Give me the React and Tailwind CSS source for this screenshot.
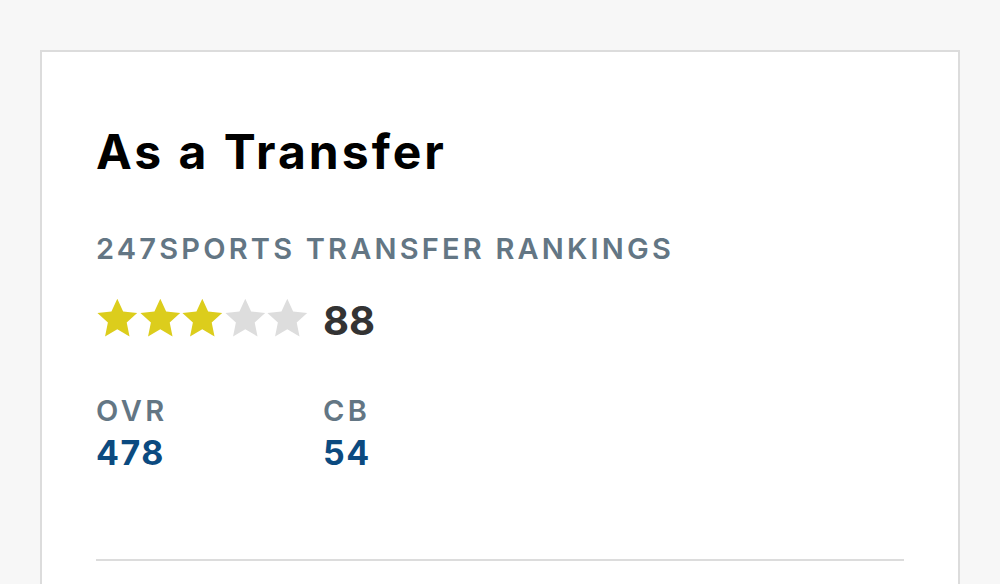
import React from "react";

const Star = ({ filled }) => (
  <svg width="42.6" height="42" viewBox="0 0 24 23" className="shrink-0">
    <path
      d="M12 0.6l3.3 7.2 7.9 0.9-5.9 5.4 1.6 7.8L12 17.9l-6.9 4 1.6-7.8L0.8 8.7l7.9-0.9z"
      fill={filled ? "#dccd1c" : "#dddddd"}
    />
  </svg>
);

const App = () => {
  const stars = [true, true, true, false, false];

  return (
    <div className="h-[584px] overflow-hidden bg-[#f7f7f7] pt-[50px] px-[40px] font-['Inter',sans-serif]">
      <div className="border-2 border-[#dcdcdc] bg-white px-[54px] pt-[76px] pb-[60px]">
        <h1 className="text-[48px] leading-[48px] font-bold text-black tracking-[3px]">As a Transfer</h1>
        <div className="mt-[58px] text-[29px] leading-[29px] font-semibold text-[#637684] tracking-[3.2px]">
          247SPORTS TRANSFER RANKINGS
        </div>
        <div className="mt-[34px] flex items-center h-[42px]">
          <div className="flex">
            {stars.map((s, i) => (
              <Star key={i} filled={s} />
            ))}
          </div>
          <span className="ml-[14px] mt-[5px] text-[40px] leading-[40px] font-bold text-[#333333]">88</span>
        </div>
        <div className="mt-[57px] flex">
          <div className="w-[227px]">
            <div className="text-[29px] leading-[29px] font-semibold text-[#637684] tracking-[3.5px]">OVR</div>
            <div className="mt-[11px] text-[34px] leading-[34px] font-bold text-[#0b4a80] tracking-[1.5px]">478</div>
          </div>
          <div>
            <div className="text-[29px] leading-[29px] font-semibold text-[#637684] tracking-[3.5px]">CB</div>
            <div className="mt-[11px] text-[34px] leading-[34px] font-bold text-[#0b4a80] tracking-[1.5px]">54</div>
          </div>
        </div>
        <div className="mt-[89px] border-t-2 border-[#dcdcdc]" />
      </div>
    </div>
  );
};

export default App;
